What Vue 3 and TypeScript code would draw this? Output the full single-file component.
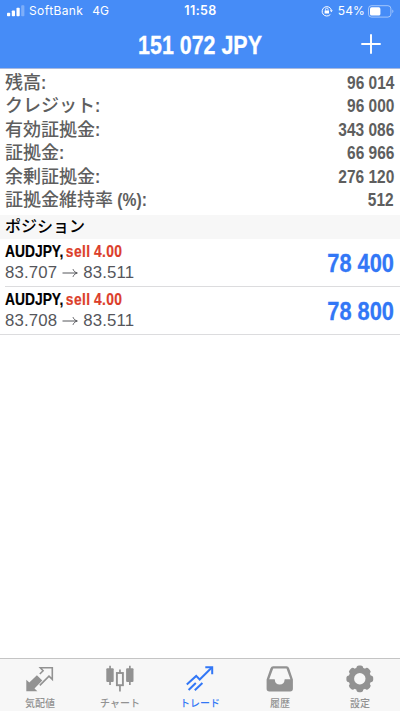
<template>
  <div class="app">
    <header class="top">
      <div class="status">
        <div class="status-left">
          <svg width="18" height="12" viewBox="0 0 18 12" fill="#fff">
            <rect x="0" y="7.8" width="3.2" height="3.5" rx="0.8" />
            <rect x="4.8" y="5.4" width="3.2" height="5.9" rx="0.8" />
            <rect x="9.5" y="2.8" width="3.2" height="8.5" rx="0.8" />
            <rect x="14.2" y="0.3" width="3.2" height="11" rx="0.8" opacity="0.3" />
          </svg>
          <span class="carrier">SoftBank</span>
          <span class="network">4G</span>
        </div>
        <span class="clock">11:58</span>
        <div class="status-right">
          <svg class="lock" width="12" height="12" viewBox="0 0 12 12" fill="none" stroke="#fff">
            <path d="M9.4 9.4A4.7 4.7 0 1 1 10.4 5.2" />
            <path d="M8.8 5.2h3l-1.4 2z" fill="#fff" stroke="none" />
            <rect x="3.6" y="5.4" width="4.4" height="3.2" rx="0.4" fill="#fff" stroke="none" />
            <path d="M4.5 5.6V4.4a1.3 1.3 0 0 1 2.6 0v1.2" stroke-width="0.8" />
          </svg>
          <span class="percent">54%</span>
          <svg width="26" height="13" viewBox="0 0 26 13" fill="none">
            <rect x="0.5" y="0.7" width="22.4" height="11.4" rx="3" stroke="#fff" stroke-opacity="0.5" />
            <rect x="2" y="2.3" width="10.4" height="8.2" rx="1.6" fill="#fff" />
            <path d="M24.3 4.6v3.6c1.5-.7 1.5-2.9 0-3.6z" fill="#fff" fill-opacity="0.5" />
          </svg>
        </div>
      </div>
      <div class="title-bar">
        <h1 class="narrow">151 072 JPY</h1>
        <button class="add" aria-label="add">
          <svg width="20" height="20" viewBox="0 0 20 20" stroke="#fff" stroke-width="1.9">
            <path d="M10 0.3v19.4M0.3 10h19.4" />
          </svg>
        </button>
      </div>
    </header>

    <dl class="account">
      <div v-for="row in account" :key="row.label" class="account-row">
        <dt>{{ row.label }}<span class="narrow suffix">{{ row.suffix }}</span></dt>
        <dd class="narrow">{{ row.value }}</dd>
      </div>
    </dl>

    <h2 class="section">ポジション</h2>

    <ul class="positions">
      <li v-for="p in positions" :key="p.open" class="position">
        <div class="info">
          <div class="symbol narrow">{{ p.symbol }}, <span class="side">{{ p.side }} {{ p.volume }}</span></div>
          <div class="prices">
            <span>{{ p.open }}</span>
            <svg width="16" height="10" viewBox="0 0 16 10" fill="none" stroke="#55565b" stroke-width="1">
              <path d="M0.5 5h14.6M11 1.2c.8 2 2.2 3.3 4.3 3.8-2.1.5-3.5 1.8-4.3 3.8" />
            </svg>
            <span>{{ p.current }}</span>
          </div>
        </div>
        <div class="profit narrow">{{ p.profit }}</div>
      </li>
    </ul>

    <nav class="tabs">
      <a v-for="tab in tabs" :key="tab.id" :class="['tab', { active: tab.id === active }]" @click="active = tab.id">
        <svg v-if="tab.id === 'quotes'" width="28" height="28" viewBox="0 0 28 28">
          <path d="M0.3 26.3V14.8l3 2.8 7.6-7.4 5.4 5.4-7.8 7.9 2.9 2.800z" fill="currentColor" />
          <path
            d="M13.8 9l3.3-3.2-2.8-3.1h12v11.700l-3.300-3.200-9.200 9.200"
            fill="none"
            stroke="currentColor"
            stroke-width="1.6"
          />
        </svg>
        <svg v-else-if="tab.id === 'chart'" width="28" height="28" viewBox="0 0 28 28" fill="currentColor">
          <rect x="0.3" y="3.3" width="7.4" height="13.6" rx="1" />
          <path d="M3.2 0.8h1.700v19.200H3.200zM23 0.800h1.700v19.200H23z" />
          <rect x="20.1" y="3.3" width="7.4" height="13.6" rx="1" />
          <rect x="10.9" y="8" width="6" height="12.2" fill="none" stroke="currentColor" stroke-width="1.9" />
          <path d="M13.1 4.4h1.700v3.600h-1.700zM13.100 21h1.700v5.600h-1.700z" />
        </svg>
        <svg
          v-else-if="tab.id === 'trade'"
          width="28"
          height="28"
          viewBox="0 0 28 28"
          fill="none"
          stroke="currentColor"
          stroke-width="2"
        >
          <path d="M0.8 19.5L10.2 10.9l3.5 3.6L25.6 2.8" />
          <path d="M19.3 2.3h6.9v6.900" />
          <path d="M2.6 25l7.2-7M8.800 25.200l7.600-7.200" />
        </svg>
        <svg v-else-if="tab.id === 'history'" width="28" height="28" viewBox="0 0 28 28">
          <path
            fill="currentColor"
            fill-rule="evenodd"
            d="M7.2 1.3h13.3q2 0 2.6 1.9l3.8 11.4v9.2q0 2.600-2.800 2.600H3.400Q.6 26.400 .6 23.800V14.600L4.500 3.200Q5.200 1.300 7.200 1.300zM7.200 3.400L3.200 14.300h5.500q.4 5.300 5 5.300t5-5.300h5.700L20.500 3.400z"
          />
        </svg>
        <svg v-else width="28" height="28" viewBox="0 0 28 28">
          <g fill="currentColor">
            <rect
              v-for="angle in [0, 45, 90, 135]"
              :key="angle"
              x="10.4"
              y="0.4"
              width="6.8"
              height="26.8"
              rx="2.6"
              :transform="`rotate(${angle} 13.8 13.8)`"
            />
            <circle cx="13.8" cy="13.8" r="11.3" />
          </g>
          <circle cx="13.8" cy="13.8" r="5.7" fill="#f7f7f7" />
        </svg>
        <span>{{ tab.label }}</span>
      </a>
    </nav>
  </div>
</template>

<script setup lang="ts">
import { ref } from 'vue'

interface AccountRow {
  label: string
  suffix: string
  value: string
}

interface Position {
  symbol: string
  side: string
  volume: string
  open: string
  current: string
  profit: string
}

const account: AccountRow[] = [
  { label: '残高', suffix: ':', value: '96 014' },
  { label: 'クレジット', suffix: ':', value: '96 000' },
  { label: '有効証拠金', suffix: ':', value: '343 086' },
  { label: '証拠金', suffix: ':', value: '66 966' },
  { label: '余剰証拠金', suffix: ':', value: '276 120' },
  { label: '証拠金維持率', suffix: ' (%):', value: '512' },
]

const positions: Position[] = [
  { symbol: 'AUDJPY', side: 'sell', volume: '4.00', open: '83.707', current: '83.511', profit: '78 400' },
  { symbol: 'AUDJPY', side: 'sell', volume: '4.00', open: '83.708', current: '83.511', profit: '78 800' },
]

const tabs = [
  { id: 'quotes', label: '気配値' },
  { id: 'chart', label: 'チャート' },
  { id: 'trade', label: 'トレード' },
  { id: 'history', label: '履歴' },
  { id: 'settings', label: '設定' },
]

const active = ref('trade')
</script>

<style>
body {
  margin: 0;
  background: #fff;
}
</style>

<style scoped>
.app {
  display: flex;
  flex-direction: column;
  width: 100%;
  height: 711px;
  overflow: hidden;
  background: #fff;
  font-family: 'Liberation Sans', 'Noto Sans CJK JP', sans-serif;
}
.narrow {
  display: inline-block;
  font-weight: 700;
  white-space: pre;
  transform: scaleX(0.87);
}
.top {
  box-sizing: border-box;
  height: 69px;
  background: #468cf7;
  border-bottom: 1px solid #a9b9de;
  color: #fff;
}
.status {
  display: grid;
  grid-template-columns: 1fr auto 1fr;
  align-items: center;
  height: 22px;
  padding: 0 6px 0 7px;
  font-family: Inter, sans-serif;
  font-size: 12px;
  line-height: 22px;
}
.status-left,
.status-right {
  display: flex;
  align-items: center;
}
.status-right {
  justify-content: flex-end;
}
.carrier {
  margin-left: 4px;
  letter-spacing: 0.4px;
}
.network {
  margin-left: 9px;
}
.clock {
  font-size: 12.5px;
  font-weight: 600;
  letter-spacing: 0.4px;
}
.lock {
  margin-right: 5px;
}
.percent {
  margin-right: 3px;
  letter-spacing: 0.1px;
}
.title-bar {
  display: grid;
  grid-template-columns: 48px 1fr 48px;
  align-items: center;
  height: 46px;
}
.title-bar h1 {
  grid-column: 2;
  margin: 0;
  font-size: 25.5px;
  line-height: 46px;
  text-align: center;
  transform: scaleX(0.84);
  -webkit-text-stroke: 0.3px currentColor;
}
.add {
  display: flex;
  padding: 0 0 2px 9px;
  border: 0;
  background: none;
}
.account {
  box-sizing: border-box;
  height: 146px;
  margin: 0;
  padding: 3px 6px 0 5px;
  color: #5e5e5e;
}
.account-row {
  display: flex;
  justify-content: space-between;
  height: 23.4px;
  line-height: 23.4px;
}
.account dt {
  font-size: 18px;
  font-weight: 500;
}
.account dd {
  margin: 0;
  font-size: 17.8px;
  line-height: 22px;
  transform-origin: right;
}
.suffix {
  transform-origin: left;
}
.section {
  height: 24px;
  margin: 0;
  padding-left: 5px;
  background: #f7f7f7;
  color: #000;
  font-size: 16px;
  font-weight: 500;
  line-height: 24px;
}
.positions {
  margin: 0;
  padding: 0;
  border-bottom: 1px solid #dcdcde;
  list-style: none;
}
.position {
  display: flex;
  align-items: center;
  justify-content: space-between;
  box-sizing: border-box;
  height: 48px;
  margin-left: 5px;
  padding-right: 6px;
  border-bottom: 1px solid #dcdcde;
}
.position:last-child {
  height: 47px;
  border-bottom: 0;
}
.info {
  padding-bottom: 1px;
}
.symbol {
  color: #000;
  font-size: 17.3px;
  line-height: 22px;
  transform: scaleX(0.8);
  transform-origin: left;
  word-spacing: -1.8px;
  -webkit-text-stroke: 0.2px currentColor;
}
.side {
  color: #dc3e2b;
  letter-spacing: 0.5px;
  word-spacing: -1px;
}
.prices {
  display: flex;
  align-items: center;
  gap: 5px;
  color: #55565b;
  font-size: 16.8px;
  letter-spacing: 0.15px;
  line-height: 22px;
}
.profit {
  padding-top: 2px;
  color: #3277f6;
  font-size: 25.5px;
  transform: scaleX(0.855);
  transform-origin: right;
  -webkit-text-stroke: 0.3px currentColor;
}
.tabs {
  display: flex;
  box-sizing: border-box;
  height: 53px;
  margin-top: auto;
  border-top: 1px solid #c4c4c4;
  background: #f7f7f7;
}
.tab {
  display: flex;
  flex: 1;
  flex-direction: column;
  align-items: center;
  padding-top: 6px;
  color: #929292;
  font-size: 10px;
  font-weight: 500;
  line-height: 21px;
}
.tab svg {
  display: block;
  flex: none;
}
.tab.active {
  color: #3277f6;
}
</style>
